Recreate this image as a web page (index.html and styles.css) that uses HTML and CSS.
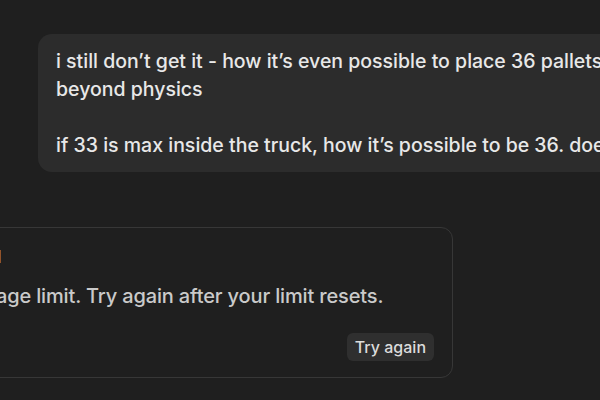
FILE: index.html
```html
<!DOCTYPE html>
<html lang="en">
<head>
    <meta charset="UTF-8">
    <meta name="viewport" content="width=device-width, initial-scale=1.0">
    <title>Chat</title>
    <link rel="stylesheet" href="styles.css">
</head>
<body>
    <div class="thread">
        <div class="user-row">
            <div class="user-bubble">
                <p class="user-text">i still don’t get it - how it’s even possible to place 36 pallets in the truck, it sounds
beyond physics

if 33 is max inside the truck, how it’s possible to be 36. doesn’t make sense</p>
            </div>
        </div>

        <div class="error-card">
            <div class="error-title">Message limit reached</div>
            <p class="error-text">You’ve reached your message limit. Try again after your limit resets.</p>
            <div class="error-actions">
                <button class="retry-button">Try again</button>
            </div>
        </div>
    </div>
</body>
</html>
```

FILE: styles.css
```css
* {
    margin: 0;
    padding: 0;
    box-sizing: border-box;
}

html, body {
    height: 100%;
}

body {
    font-family: Inter, 'Noto Sans', sans-serif;
    background: #1f1f1f;
    color: #e6e6e6;
    overflow: hidden;
}

.thread {
    padding-top: 34px;
}

.user-row {
    padding-left: 38px;
}

.user-bubble {
    width: 900px;
    background: #2c2c2c;
    border-radius: 14px;
    padding: 13px 18px 13px;
}

.user-text {
    font-size: 19.5px;
    font-weight: 500;
    line-height: 28px;
    white-space: pre;
    color: #e8e8e8;
}

.error-card {
    width: 753px;
    margin-top: 55px;
    margin-left: -300px;
    height: 151px;
    border: 1px solid #373737;
    border-radius: 12px;
    padding: 17px 18px 16px 0;
    display: flex;
    flex-direction: column;
}

.error-title {
    font-size: 17px;
    font-weight: 600;
    line-height: 24px;
    color: #d8d8d8;
    padding-left: 115px;
}

.error-text {
    font-size: 20px;
    font-weight: 500;
    letter-spacing: -0.15px;
    line-height: 28px;
    color: #cacaca;
    margin-top: 13px;
    padding-left: 45px;
}

.error-actions {
    margin-top: auto;
    display: flex;
    justify-content: flex-end;
}

.retry-button {
    font-family: inherit;
    font-size: 16px;
    font-weight: 500;
    color: #dcdcdc;
    background: #2f2f2f;
    border: none;
    border-radius: 6px;
    padding: 0 8px;
    height: 28px;
    cursor: pointer;
}
```
